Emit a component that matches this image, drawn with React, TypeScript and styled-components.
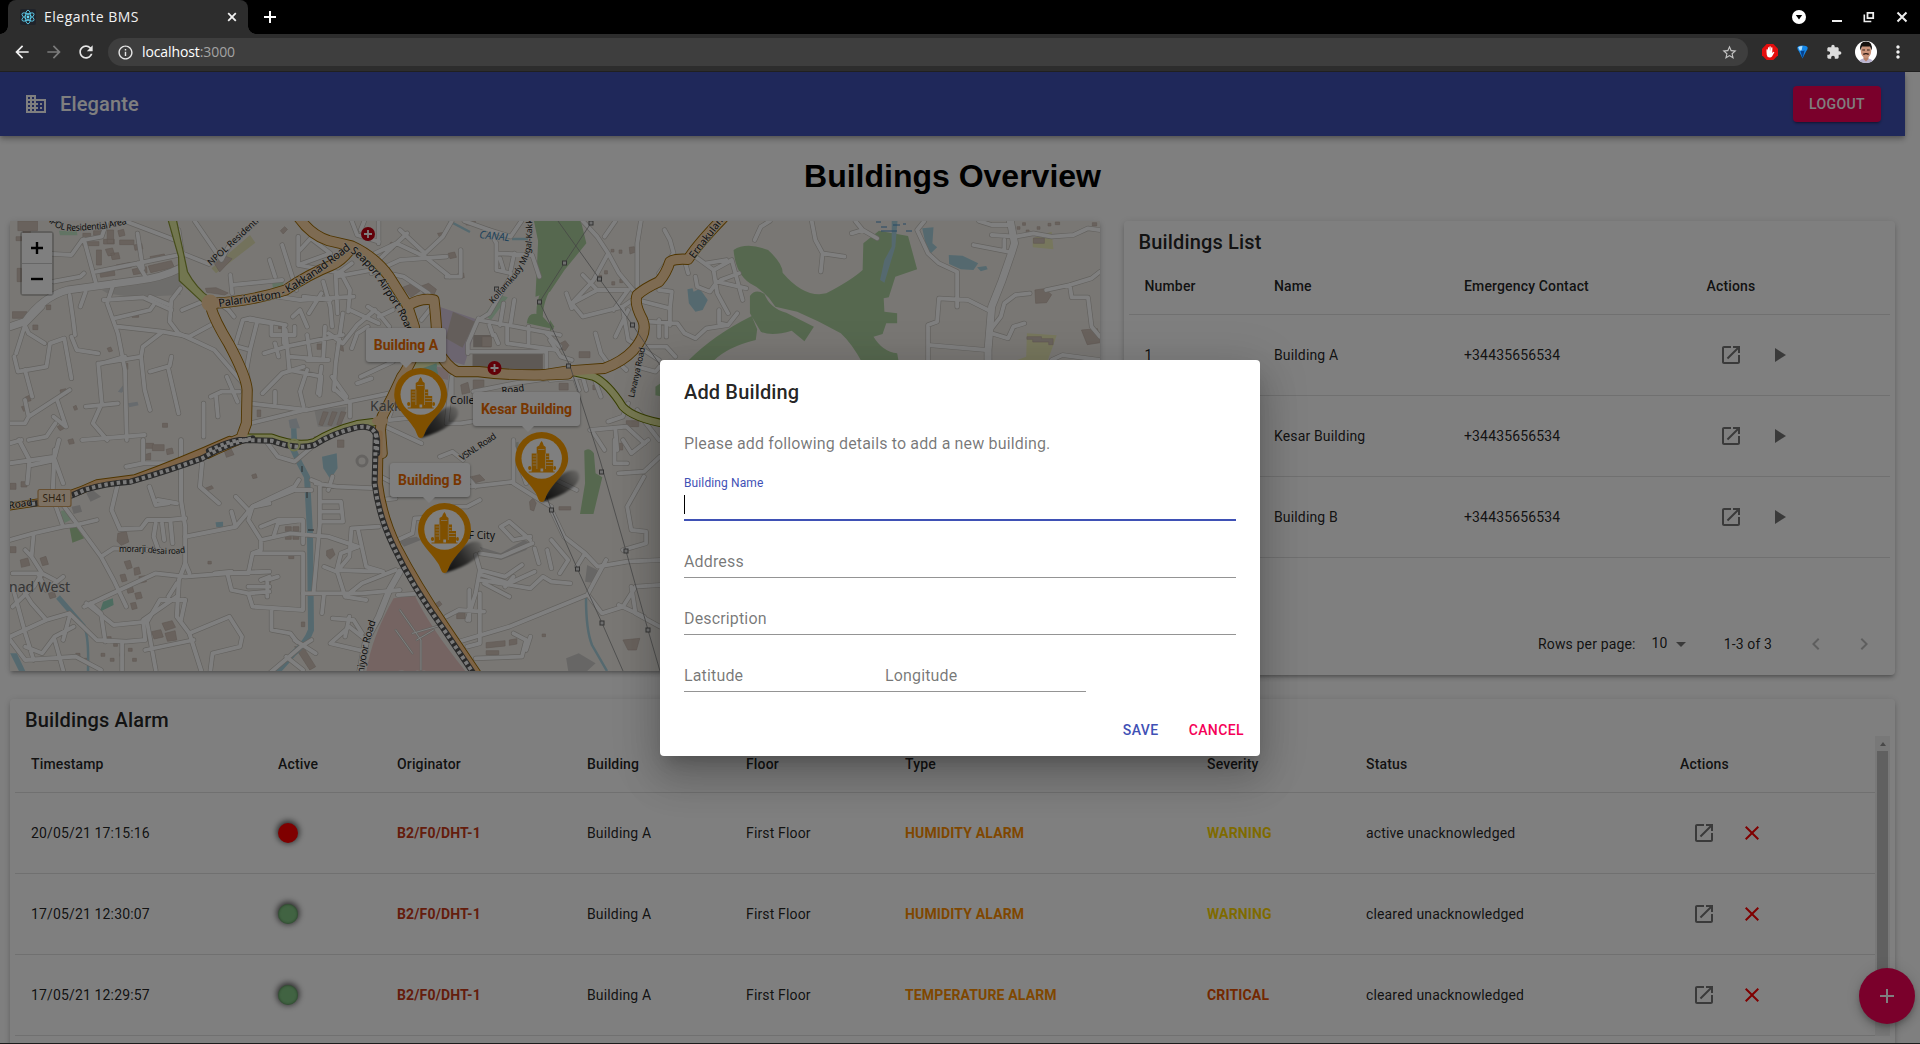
import React from "react";
import styled, { createGlobalStyle } from "styled-components";

const GlobalStyle = createGlobalStyle`
  html, body { margin: 0; padding: 0; background: #000; overflow: hidden; }
  * { box-sizing: border-box; }
`;

const UI = `Roboto, "Liberation Sans", sans-serif`;
const MAPFONT = `"Noto Sans", "Open Sans", sans-serif`;

/* ---------- browser frame ---------- */

const Screen = styled.div`
  width: 1920px;
  height: 1044px;
  display: flex;
  flex-direction: column;
  overflow: hidden;
  font-family: ${UI};
`;

const TabStrip = styled.div`
  height: 34px;
  flex: none;
  background: #000;
  display: flex;
  align-items: center;
  padding: 0 11px 0 8px;
`;

const Tab = styled.div`
  position: relative;
  width: 240px;
  height: 34px;
  background: #2d2d2d;
  border-radius: 8px 8px 0 0;
  display: flex;
  align-items: center;
  padding: 0 9px 0 12px;
  &::before, &::after {
    content: "";
    position: absolute;
    bottom: 0;
    width: 8px;
    height: 8px;
  }
  &::before { left: -8px; background: radial-gradient(circle at 0 0, #000 7.5px, #2d2d2d 8px); }
  &::after { right: -8px; background: radial-gradient(circle at 100% 0, #000 7.5px, #2d2d2d 8px); }
`;

const TabTitle = styled.span`
  flex: 1;
  margin-left: 8px;
  font: 400 14px/18px "Open Sans", "Noto Sans", sans-serif;
  letter-spacing: 0.5px;
  color: #f1f1f1;
`;

const NewTab = styled.div`
  margin-left: 15px;
  display: flex;
  flex: 1;
`;

const WindowButtons = styled.div`
  display: grid;
  grid-template-columns: 39px 32px 33px 13px;
  align-items: center;
`;

const Toolbar = styled.div`
  height: 38px;
  flex: none;
  background: #2d2d2d;
  border-bottom: 1px solid #202020;
  display: flex;
  align-items: center;
  padding: 0 0 1px 12px;
`;

const NavIcons = styled.div`
  display: flex;
  flex: none;
  gap: 12px;
  width: 96px;
`;

const Omnibox = styled.div`
  width: 1640px;
  flex: none;
  height: 28px;
  border-radius: 14px;
  background: #3e3e3e;
  display: flex;
  align-items: center;
  padding: 0 10px 0 9px;
`;

const Url = styled.span`
  flex: 1;
  margin-left: 8px;
  font: 400 14px/20px "Open Sans", "Noto Sans", sans-serif;
  letter-spacing: -0.1px;
  color: #fff;
  span { color: #a3a3a3; }
`;

const Extensions = styled.div`
  flex: none;
  margin-left: 6px;
  display: grid;
  grid-template-columns: repeat(5, 32px);
  align-items: center;
  justify-items: center;
`;

/* ---------- page ---------- */

const Viewport = styled.div`
  position: relative;
  height: 972px;
  flex: none;
  overflow: hidden;
  background: #fff;
  color: rgba(0, 0, 0, 0.87);
`;

const Page = styled.div`
  width: 1905px;
`;

const AppBar = styled.header`
  position: relative;
  height: 64px;
  background: #3f51b5;
  color: #fff;
  display: flex;
  align-items: center;
  padding: 0 24px;
  box-shadow: 0 2px 4px -1px rgba(0, 0, 0, 0.2), 0 4px 5px 0 rgba(0, 0, 0, 0.14), 0 1px 10px 0 rgba(0, 0, 0, 0.12);
`;

const Brand = styled.div`
  flex: 1;
  margin-left: 12px;
  font-size: 20px;
  line-height: 32px;
  font-weight: 500;
  letter-spacing: 0.0075em;
`;

const Logout = styled.button`
  width: 88px;
  height: 36px;
  padding: 0;
  border: 0;
  border-radius: 4px;
  background: #f50057;
  color: #fff;
  font: 500 14px/24px ${UI};
  letter-spacing: 0.02857em;
  box-shadow: 0 3px 1px -2px rgba(0, 0, 0, 0.2), 0 2px 2px 0 rgba(0, 0, 0, 0.14), 0 1px 5px 0 rgba(0, 0, 0, 0.12);
`;

const Heading = styled.h1`
  margin: 0;
  height: 85px;
  display: flex;
  align-items: center;
  justify-content: center;
  padding-bottom: 5px;
  font: 700 32px/38px "Liberation Sans", sans-serif;
  color: #000;
`;

const Content = styled.main`
  padding: 0 10px;
  display: grid;
  grid-template-columns: 1090px 771px;
  grid-template-rows: 454px 360px;
  gap: 24px 23.5px;
`;

const Paper = styled.section`
  background: #fff;
  border-radius: 4px;
  box-shadow: 0 3px 3px -2px rgba(0, 0, 0, 0.2), 0 3px 4px 0 rgba(0, 0, 0, 0.14), 0 1px 8px 0 rgba(0, 0, 0, 0.12);
  padding: 5px 5px 0;
`;

const WidePaper = styled(Paper)`
  grid-column: 1 / 3;
`;

const MapPaper = styled.section`
  position: relative;
  height: 450px;
  box-shadow: 0 3px 3px -2px rgba(0, 0, 0, 0.2), 0 3px 4px 0 rgba(0, 0, 0, 0.14), 0 1px 8px 0 rgba(0, 0, 0, 0.12);
  svg { display: block; }
`;

const CardTitle = styled.h2`
  margin: 0;
  padding-left: 10px;
  font: 500 20px/32px ${UI};
  letter-spacing: 0.0075em;
`;

const Row = styled.div<{ $cols: string; $head?: boolean }>`
  display: grid;
  grid-template-columns: ${(p) => p.$cols};
  align-items: center;
  height: ${(p) => (p.$head ? 57 : 81)}px;
  border-bottom: 1px solid #e0e0e0;
  font-size: 14px;
  font-weight: ${(p) => (p.$head ? 500 : 400)};
  letter-spacing: 0.01071em;
  line-height: 20px;
`;

const Cell = styled.div<{ $color?: string }>`
  padding-left: 16px;
  white-space: nowrap;
  ${(p) => (p.$color ? `color: ${p.$color}; font-weight: 700;` : "")}
`;

const CellActions = styled.div`
  padding-left: 28px;
  display: flex;
  gap: 24px;
  color: rgba(0, 0, 0, 0.54);
`;

const Led = styled.i<{ $on: boolean }>`
  display: block;
  width: 20px;
  height: 20px;
  border-radius: 50%;
  background: ${(p) => (p.$on ? "#f00" : "#83c785")};
  box-shadow: ${(p) =>
    p.$on
      ? "rgba(0,0,0,.7) 0 -1px 6px 1px"
      : "rgba(0,0,0,.7) 0 -1px 6px 1px, inset rgba(30,60,30,.6) 0 0 3px"};
`;

const Pagination = styled.div`
  display: flex;
  align-items: center;
  height: 56px;
  margin-top: 58px;
  padding-left: 409.5px;
  font-size: 14px;
  letter-spacing: 0.01071em;
`;

const PageSize = styled.span`
  display: flex;
  align-items: center;
  margin: -3px 31px 0 16px;
  svg { margin: 3px 0 0 1px; }
`;

const Pager = styled.div`
  display: flex;
  gap: 24px;
  margin-left: 32px;
  color: rgba(0, 0, 0, 0.26);
`;

const ScrollPane = styled.div`
  display: grid;
  grid-template-columns: 1860px 15px;
`;

const ScrollTrack = styled.div`
  background: #f1f1f1;
  display: flex;
  flex-direction: column;
  align-items: center;
`;

const ScrollArrow = styled.div`
  height: 15px;
  display: flex;
  align-items: center;
  &::after {
    content: "";
    border: 3.5px solid transparent;
    border-top: 0;
    border-bottom: 4px solid #909090;
    margin-top: 1px;
  }
`;

const ScrollThumb = styled.div`
  width: 11px;
  height: 245px;
  background: #c1c1c1;
`;

const Fab = styled.button`
  position: absolute;
  left: 1859px;
  top: 896px;
  width: 56px;
  height: 56px;
  padding: 0;
  border: 0;
  border-radius: 50%;
  background: #f50057;
  color: #fff;
  display: grid;
  place-items: center;
  box-shadow: 0 3px 5px -1px rgba(0, 0, 0, 0.2), 0 6px 10px 0 rgba(0, 0, 0, 0.14), 0 1px 18px 0 rgba(0, 0, 0, 0.12);
`;

const Backdrop = styled.div`
  position: absolute;
  inset: 0;
  background: rgba(0, 0, 0, 0.5);
  border-bottom: 1px solid #1c1c1c;
  display: flex;
  align-items: center;
  justify-content: center;
`;

/* ---------- dialog ---------- */

const Dialog = styled.div`
  width: 600px;
  height: 396px;
  background: #fff;
  border-radius: 4px;
  display: flex;
  flex-direction: column;
  box-shadow: 0 11px 15px -7px rgba(0, 0, 0, 0.2), 0 24px 38px 3px rgba(0, 0, 0, 0.14), 0 9px 46px 8px rgba(0, 0, 0, 0.12);
`;

const DialogTitle = styled.h2`
  margin: 0;
  padding: 16px 24px;
  font: 500 20px/32px ${UI};
  letter-spacing: 0.0075em;
`;

const DialogBody = styled.div`
  flex: 1;
  padding: 8px 24px 0;
  display: flex;
  flex-direction: column;
`;

const DialogText = styled.p`
  margin: 0 0 17px;
  font-size: 16px;
  line-height: 24px;
  letter-spacing: 0.00938em;
  color: rgba(0, 0, 0, 0.54);
`;

const Field = styled.label<{ $focused?: boolean; $width?: number }>`
  width: ${(p) => (p.$width ? `${p.$width}px` : "100%")};
  height: 48px;
  margin-bottom: 9px;
  display: flex;
  flex-direction: column;
  justify-content: space-between;
  padding-top: ${(p) => (p.$focused ? 2 : 21)}px;
  border-bottom: ${(p) => (p.$focused ? "2px solid #3f51b5" : "1px solid #949494")};
  font-size: ${(p) => (p.$focused ? 12 : 16)}px;
  line-height: ${(p) => (p.$focused ? 16 : 22)}px;
  letter-spacing: 0.00938em;
  color: ${(p) => (p.$focused ? "#3f51b5" : "rgba(0,0,0,.54)")};
`;

const Caret = styled.i`
  width: 1px;
  height: 19px;
  margin-bottom: 5px;
  background: #000;
`;

const FieldPair = styled.div`
  display: flex;
`;

const DialogActions = styled.div`
  display: flex;
  justify-content: flex-end;
  gap: 8px;
  padding: 0 8px 8px;
`;

const TextButton = styled.button<{ $color: string }>`
  height: 36px;
  min-width: 64px;
  padding: 0 8px;
  border: 0;
  background: none;
  color: ${(p) => p.$color};
  font: 500 14px/24px ${UI};
  letter-spacing: 0.02857em;
`;

/* ---------- map overlays ---------- */

const ZoomControl = styled.div`
  position: absolute;
  left: 10px;
  top: 10px;
  width: 34px;
  border: 2px solid rgba(0, 0, 0, 0.2);
  border-radius: 4px;
  background-clip: padding-box;
`;

const ZoomButton = styled.div`
  height: 30px;
  background: #fff;
  background-clip: padding-box;
  display: grid;
  place-items: center;
  & + & { border-top: 1px solid #ccc; height: 31px; }
`;

const Tip = styled.div<{ $x: number; $y: number; $w: number; $arrow: number }>`
  position: absolute;
  left: ${(p) => p.$x}px;
  top: ${(p) => p.$y}px;
  width: ${(p) => p.$w}px;
  height: 34px;
  border-radius: 3px;
  background: #fff;
  color: #ee6c00;
  font: 700 14px/35px ${UI};
  text-align: center;
  white-space: nowrap;
  box-shadow: 0 1px 3px rgba(0, 0, 0, 0.4);
  &::after {
    content: "";
    position: absolute;
    left: ${(p) => p.$arrow}px;
    bottom: -6px;
    margin-left: -6px;
    border: 6px solid transparent;
    border-bottom: 0;
    border-top-color: #fff;
  }
`;

/* ---------- icons ---------- */

const paths = {
  business:
    "M12 7V3H2v18h20V7H12zM6 19H4v-2h2v2zm0-4H4v-2h2v2zm0-4H4V9h2v2zm0-4H4V5h2v2zm4 12H8v-2h2v2zm0-4H8v-2h2v2zm0-4H8V9h2v2zm0-4H8V5h2v2zm10 12h-8v-2h2v-2h-2v-2h2v-2h-2V9h8v10zm-2-8h-2v2h2v-2zm0 4h-2v2h2v-2z",
  open: "M19 19H5V5h7V3H5c-1.11 0-2 .9-2 2v14c0 1.1.89 2 2 2h14c1.1 0 2-.9 2-2v-7h-2v7zM14 3v2h3.59l-9.83 9.83 1.41 1.41L19 6.41V10h2V3h-7z",
  play: "M8 5v14l11-7z",
  close: "M19 6.41L17.59 5 12 10.59 6.41 5 5 6.41 10.59 12 5 17.59 6.41 19 12 13.41 17.59 19 19 17.59 13.41 12z",
  add: "M19 13h-6v6h-2v-6H5v-2h6V5h2v6h6v2z",
  left: "M15.41 7.41L14 6l-6 6 6 6 1.41-1.41L10.83 12z",
  right: "M10 6L8.59 7.41 13.17 12l-4.58 4.59L10 18l6-6z",
  drop: "M7 10l5 5 5-5z",
  back: "M20 11H7.83l5.59-5.59L12 4l-8 8 8 8 1.41-1.41L7.83 13H20v-2z",
  forward: "M12 4l-1.41 1.41L16.17 11H4v2h12.17l-5.58 5.59L12 20l8-8z",
  reload:
    "M17.65 6.35C16.2 4.9 14.21 4 12 4c-4.42 0-7.99 3.58-7.99 8s3.57 8 7.99 8c3.73 0 6.84-2.55 7.73-6h-2.08c-.82 2.33-3.04 4-5.65 4-3.31 0-6-2.69-6-6s2.69-6 6-6c1.66 0 3.14.69 4.22 1.78L13 11h7V4l-2.35 2.35z",
  info: "M11 7h2v2h-2zm0 4h2v6h-2zm1-9C6.48 2 2 6.48 2 12s4.48 10 10 10 10-4.48 10-10S17.52 2 12 2zm0 18c-4.41 0-8-3.59-8-8s3.59-8 8-8 8 3.59 8 8-3.59 8-8 8z",
  star: "M22 9.24l-7.19-.62L12 2 9.19 8.63 2 9.24l5.46 4.73L5.82 21 12 17.27 18.18 21l-1.63-7.03L22 9.24zM12 15.4l-3.76 2.27 1-4.28-3.32-2.88 4.38-.38L12 6.1l1.71 4.04 4.38.38-3.32 2.88 1 4.28L12 15.4z",
  puzzle:
    "M20.5 11H19V7c0-1.1-.9-2-2-2h-4V3.5C13 2.12 11.88 1 10.5 1S8 2.12 8 3.5V5H4c-1.1 0-1.99.9-1.99 2v3.8H3.5c1.49 0 2.7 1.21 2.7 2.7s-1.21 2.7-2.7 2.7H2V20c0 1.1.9 2 2 2h3.8v-1.5c0-1.49 1.21-2.7 2.7-2.7 1.49 0 2.7 1.21 2.7 2.7V22H17c1.1 0 2-.9 2-2v-4h1.5c1.38 0 2.5-1.12 2.5-2.5S21.88 11 20.5 11z",
  dots: "M12 8c1.1 0 2-.9 2-2s-.9-2-2-2-2 .9-2 2 .9 2 2 2zm0 2c-1.1 0-2 .9-2 2s.9 2 2 2 2-.9 2-2-.9-2-2-2zm0 6c-1.1 0-2 .9-2 2s.9 2 2 2 2-.9 2-2-.9-2-2-2z",
};

const Icon = ({ name, size = 24, color = "currentColor" }: { name: keyof typeof paths; size?: number; color?: string }) => (
  <svg width={size} height={size} viewBox="0 0 24 24" fill={color}>
    <path d={paths[name]} />
  </svg>
);

const ReactLogo = () => (
  <svg width="16" height="16" viewBox="0 0 16 16">
    <rect width="16" height="16" rx="2" fill="#20232a" />
    <g fill="none" stroke="#61dafb" strokeWidth=".8">
      {[0, 60, 120].map((a) => (
        <ellipse key={a} cx="8" cy="8" rx="6.8" ry="2.7" transform={`rotate(${a + 30} 8 8)`} />
      ))}
    </g>
    <circle cx="8" cy="8" r="1.4" fill="#61dafb" />
  </svg>
);

const Avatar = () => (
  <svg width="22" height="22" viewBox="0 0 22 22">
    <clipPath id="face"><circle cx="11" cy="11" r="11" /></clipPath>
    <g clipPath="url(#face)">
      <rect width="22" height="22" fill="#fff" />
      <path d="M3 22q1-4 6-4.500h4q5 .5 6 4.500z" fill="#b9b3cf" />
      <path d="M8.500 14h5v4l-2.500 2.500L8.500 18z" fill="#b98268" />
      <ellipse cx="11" cy="10" rx="5.200" ry="7" fill="#c99279" />
      <path d="M5.300 9.500Q4 .5 11 .5t5.700 9L15 5.600H7z" fill="#15110f" />
      <path d="M7.300 9h2.700M12 9h2.700" stroke="#33201a" strokeWidth="1.200" />
      <path d="M8.300 13.400q2.700-1.600 5.400 0" stroke="#2a1712" strokeWidth="1.400" fill="none" />
    </g>
  </svg>
);

/* ---------- map ---------- */

type Sheet = "nw" | "sw" | "ne";
const sheets: Record<Sheet, string> = {
  nw: "translate(0 210) scale(.357143 .333333)",
  sw: "translate(0 440) scale(.420911 .333333)",
  ne: "translate(550 210) scale(.363504 .333333)",
};

const areas: [Sheet, string, string][] = [
  ["nw", "#add19e", "M1495 33H1570V190Q1520 260 1520 320L1552 358 1475 340Q1478 308 1502 312 1500 250 1550 180L1540 130 1510 110Z"],
  ["nw", "#c5e8c9", "M1355 315L1400 255 1422 262 1375 330ZM165 62H215L217 76H168ZM762 218L795 215 790 235 765 240Z"],
  ["nw", "#d9cbe0", "M1230 290L1340 330 1300 465 1250 450Z"],
  ["nw", "#c9bdb6", "M1268 305L1330 335 1295 413 1248 385Z"],
  ["nw", "#bdb2ab", "M1323 432H1520V480H1323ZM1325 375H1375V412H1325Z"],
  ["nw", "#e7e5b8", "M700 75L715 98 605 190 592 175Z"],
  ["nw", "#eef0b4", "M1140 470L1160 455 1225 452 1240 462 1190 475Z"],
  ["nw", "#a3ddc6", "M1175 478L1222 460 1230 500 1200 485Z"],
  ["nw", "#e6cfd0", "M1222 470L1258 475 1255 510 1230 505Z"],
  ["nw", "#dcdad6", "M285 240L400 212 490 178 510 200 505 255 370 262 300 250ZM880 600L970 590 955 650 890 650Z"],
  ["nw", "#cfd6dc", "M330 545L345 525 352 540 340 548ZM358 580L385 575 388 586 362 592ZM808 630L830 625 840 655 812 655Z"],
  ["nw", "#aad3df", "M815 655H830L832 690 816 700Z"],
  ["sw", "#aad3df", "M765 50L800 40 802 85 785 118 768 85ZM512 247L530 245 530 260 514 262Z"],
  ["sw", "#aad3df", "M24 640L40 640 60 693 45 693Z"],
  ["sw", "#add19e", "M1388 32Q1400 20 1411 40L1415 100 1431 112 1410 222 1378 222 1390 130ZM165 262L180 258 200 295 172 308Z"],
  ["sw", "#c5e8c9", "M145 212L160 210 168 240 148 252Z"],
  ["sw", "#9ad8c0", "M237 515L245 485 268 475 270 495Z"],
  ["sw", "#ebc9c5", "M935 475L985 465Q1020 560 1110 700H870Q880 600 935 475Z"],
  ["sw", "#cfcdcb", "M1140 320L1190 340 1245 300 1262 310 1250 330 1190 360 1150 345ZM945 300L990 290 1000 300 960 320ZM1395 375L1420 390 1415 430 1390 425ZM1345 655L1375 640 1415 670 1395 693H1350ZM170 200L190 195 195 215 175 222ZM205 160L220 150 240 170 215 185Z"],
  ["sw", "#cdd0c2", "M1218 10L1232 5 1232 80 1218 70Z"],
  ["ne", "#add19e", "M-30 33H85L100 100 40 180 0 245-40 260Z"],
  ["ne", "#add19e", "M505 120Q540 95 600 120 640 160 640 188 700 265 760 250 830 210 860 180L862 100 905 62 985 78 1010 178 950 200 932 262 918 265 920 305 955 310V340L925 340 915 372 890 380Q915 425 955 430L960 460H860Q830 400 800 370L740 335 680 305 620 290Q590 240 550 220 510 190 505 120Z"],
  ["ne", "#add19e", "M550 258Q565 235 590 252 605 295 650 308L726 350 700 394 665 362Q610 380 580 365L550 310ZM380 452Q450 375 555 318L570 358 566 390Q490 410 450 452ZM290 530L310 515V560L290 556ZM0 330L12 350 0 365Z"],
  ["ne", "#aad3df", "M378 238L392 235 395 245 412 236 434 270 420 300 400 305 382 280ZM1024 55L1055 52 1052 100 1065 112 1048 130 1035 112ZM1097 135L1135 137 1178 160 1165 180 1130 178 1098 162ZM1175 172L1200 168 1204 178 1185 184Z"],
  ["ne", "#aad3df", "M940 33H956L950 110 920 218 908 210 920 150 940 110Z"],
  ["ne", "#efeebb", "M1328 85L1380 65 1385 118 1328 112ZM1312 370L1394 376 1370 450H1285L1310 440Z"],
];

const buildings: [Sheet, string][] = [
  ["nw", "M50 33H105V62H85V90H65V62H50ZM232 70h22v18h-22zM262 62h30v14h-30zM300 60h18v40h-18zM330 62l16-4 4 18-16 4zM232 95h45v12h-45zM290 88h30v14h-30zM335 90h40v14h-40zM270 120h14v45h-14zM295 118l20-4 6 20-18 4zM375 105l22-4 3 16-22 4zM325 165l40-8 3 15-40 8zM420 140l40-8 4 14-40 8zM415 168l65-16 8 20-66 16zM280 190l40-8 2 14-40 6zM370 178l40-8 2 18-38 6zM310 130l22-2 4 18-22 3z"],
  ["nw", "M785 62l12-12 8 8-12 14zM1225 70l25-4-5 14-14 2zM1255 130l18-4 5 16-18 4zM1280 192l18-3 2 14-18 2zM1305 33h26v12h-26zM1095 96l16 10-10 14-16-8zM600 160l30-22 20 8-35 40zM888 402h18v16h-18zM940 400l18-10 4 34-18-8zM780 340h12v16h-12zM575 235l30-2 34 16-10 6-50-8zM1180 228l20-8 22 18-12 28-24-10zM1128 232l32-14 20 22-30 22zM1325 510h30v35h-30zM1290 525l20-8 6 30-22 6zM1350 380h26v30h-26z"],
  ["nw", "M45 80h16v12H45zM48 175h12v40H48zM35 305h40v20H35zM130 285h12v14h-12zM92 345h14v14H92zM370 312h18v10h-18zM300 415l10-4 5 12-10 3zM348 460h10v18h-10zM168 540l16-4 4 18-16 4zM70 562l12-6 5 16-14 4zM60 590l14-4 4 14-12 4zM205 590l8-4 4 12-8 3zM160 650l14-8 8 12-14 8zM190 690l14-4 4 14-14 3zM455 640h14v12h-14zM400 700h30v15h-30zM720 600h10v20h-10zM905 605l14 2-16 40-10-3zM930 605l14 2-16 40-10-3zM955 605l14 2-16 40-10-3zM880 680h10v18h-10zM945 690h18v22h-18z"],
  ["sw", "M340 45l18-6v20h-18zM362 14h28v18h-28zM395 28l14-4 3 16-15 4zM420 62l14-4 3 18-14 4zM532 30l16-6 8 20-18 8zM24 130h14v18H24zM50 125h14v16H50zM598 105l10-4 3 12-10 3zM487 145l16-8 4 8-16 8zM280 280l20-6 6 32-18 10-10-12zM678 260h14v14h-14zM696 260h14v14h-14zM678 278h14v20h-14zM696 278h14v20h-14zM776 332l14-6 6 18-12 14-8-10zM686 340h12v16h-12zM494 364h8v8h-8zM632 412h10v18h-10zM716 546h8v14h-8zM1120 110l20-6 12 16-22 8zM1328 200h28v10h-28zM1258 185l8-10 8 14-6 24-8-4z"],
  ["sw", "M24 320h14v18H24zM48 360l18-6 5 22-20 6zM50 396h18v10H50zM95 355l14-6 6 24-14 4zM90 400h14v12H90zM128 420h14v12h-14zM115 460l14-5 4 16-14 5zM50 440h14v14H50zM295 365l14-4 5 22-12 5zM318 385l12-4 4 20-14 5zM285 405l12-3 5 20-12 4zM330 410l14-3 4 18-14 4zM300 440l14-4 4 20-14 4zM320 460l14-4 4 18-14 4zM310 490l12-3 4 18-12 4zM385 550l24-8 8 20-24 10zM360 575l22-6 6 22-22 6zM392 580l24-8 4 28-22 4zM255 590h9v9h-9zM270 610h9v9h-9zM285 640h9v9h-9zM305 625h9v9h-9zM315 655h9v9h-9zM240 640h9v9h-9zM262 655h9v9h-9zM180 640h10v12h-10zM200 655h10v12h-10zM700 620l20 0 30 60-14 10zM1155 608l45-6v16l-45 6zM1155 632h30v12h-30zM1210 600l18-4v16l-18 4zM1085 518h20v18h-20zM1030 495l14-12 6 10-14 14zM1480 600l40-5-8 35-20 0zM1288 582h8v8h-8z"],
  ["ne", "M218 112l14-2 4 16-16 6zM168 118h8v8h-8zM190 120h8v10h-8zM150 182h8v10h-8zM170 215h8v10h-8zM192 208h8v10h-8zM134 196h8v10h-8zM28 400l14-8 10 14-10 16-14-6zM80 425h30v18H80zM25 520h25v20H25zM210 632h34v18h-34zM180 700h20v20h-20zM118 525h12v14h-12zM1334 240l26-4 20 18-14 24-30 2zM1462 360l44-4 8 42-36 6zM1312 380h40v6h32v18h-12v-8h-44v-8h-16zM1330 84h30v16h-30zM1492 38h12v10h-12zM1285 50h8v8h-8zM1310 60h8v8h-8zM1340 50h8v8h-8zM1370 40h8v8h-8zM1390 36h12v8h-12zM1300 38h8v8h-8z"],
];

/* minor streets */
const streets: [Sheet, string, number?][] = [
  ["nw", "M28 350L70 335Q120 260 190 240L380 212Q450 205 510 172", 7],
  ["nw", "M300 33L285 80 235 90M235 88L270 225 220 240M270 185L385 160 500 135M385 160L410 205M350 33L490 90M120 130L200 135 230 90M150 215L225 200 235 190M385 70L400 175M500 60L510 130 585 162M545 33L620 150 640 110"],
  ["nw", "M65 335L80 370 125 400M40 440L50 485 130 470 140 400 180 385 200 505M195 255L205 330 210 375M240 245L225 290M200 380L215 420 275 430M320 215L300 280 330 370 350 480 355 690M290 270L400 262 480 300M320 325L420 300 430 285M120 290L70 345 45 430M280 460L395 440 400 410 455 365 530 380 590 345M275 460L285 580M350 440L280 462M330 350L455 365"],
  ["nw", "M505 235L480 270 475 335 500 370 600 420 680 520M510 300L590 265M420 260L475 285M70 480L90 560M28 700L60 690M70 570L80 620 70 640 30 640M80 620L195 540M160 570L185 650 150 620M80 690L130 680 155 640M285 580L260 640 300 690M240 590L330 580M395 440L405 540 420 600M230 690L405 675M420 485L475 468 480 440M470 470L500 610"],
  ["nw", "M645 195L650 250M650 225L790 210M755 150L770 200M620 285L640 300 655 320M790 105L830 240M835 80V165L925 130 870 85 840 120M835 165L960 190M870 70L935 100M985 160L940 195 945 310M940 200L1040 180 1090 190M905 215L925 290 930 350M900 250L865 310M960 200L980 240 975 305M925 270L850 260M745 255L840 270 990 260"],
  ["nw", "M650 405L700 420M655 420L680 330 700 325 800 345M760 340V375H825V350M795 350V400M820 320L840 300 860 350M700 540L690 480 700 420 720 335M760 340L700 330M740 430L800 410 960 375M800 360L810 480M860 375L870 450M910 350L905 450 860 450M960 310L940 460 935 540M770 400L780 440M810 480L900 500 895 555M860 480L840 545 850 590M810 440L920 450M920 370L960 400 1000 345 1050 300"],
  ["nw", "M700 580L860 600 1000 570 1100 548M590 560L620 545 670 545M605 560L610 620M700 640L860 598M735 550L790 490 850 470M770 580L770 545M940 540L980 580 980 620M900 470L890 550M930 500L970 560M570 580L570 680M635 500L665 575M1040 190L1120 150 1250 140M985 33L1000 75 1060 95M1020 33L1010 60"],
  ["nw", "M1120 60L1190 130 1240 80 1265 33M1060 33L1060 100M1050 130L1110 100 1190 140 1260 200M1040 180L1130 200 1200 250M1140 70L1050 160M1300 33L1370 60 1430 80 1460 33M1370 60L1390 100 1390 180 1430 190M1390 130L1490 135 1510 200M1400 145L1410 180M1440 130L1430 180M1290 120V200L1250 200M1210 290L1180 330M1030 290L1060 310 1090 350M1060 320L1100 300M985 415L1000 370 1030 350M980 300L1060 340"],
  ["nw", "M1340 325L1310 400 1310 430M1340 330L1420 345 1568 375M1340 330L1370 310 1430 200M1370 345L1380 375M1420 350L1420 400 1560 420M1310 425H1530V480M1350 485H1420M1385 375L1395 400M1265 500L1250 640 1290 640 1440 615M1265 500V560M1410 280L1400 345M1440 270L1430 340M1480 350V400M1530 370L1568 410M1140 510L1110 560 1090 620M1090 630L1180 620 1190 640M1080 650L1180 700"],
  ["nw", "M1325 545L1440 520 1568 500M1010 500L1100 455M1000 520L1040 505"],
  ["sw", "M24 70L130 50 140 0M45 0L70 60 65 130M75 75L130 60 150 130M130 30L125 160M280 130L265 210 285 268 335 265 350 240 400 240 440 235M430 0L430 180 440 260 440 370 450 400", 4],
  ["sw", "M440 370L425 420 420 530 450 580 480 700M340 0V70L300 80M340 70L420 70M355 140L370 195 400 190M370 250L365 290 375 325M385 250L390 300M405 245L410 310M480 70L475 140 520 190M420 190L375 180M440 290L560 260 600 200 640 190M560 260L550 215M600 200L700 140 710 120", 4],
  ["sw", "M24 300L80 280 150 260 130 190 150 195 240 350 270 420 300 500M150 260L180 255 230 240M80 280L75 350 100 400 80 440 30 500M30 400L90 400 110 450 150 410M100 400L130 420M60 330L75 350M240 350L270 325 340 330 380 330M200 500L250 470 370 400 440 410 540 400 640 395M205 490L270 555 350 545 380 480 440 480"],
  ["sw", "M24 590L110 540 165 520M30 440L60 580 80 660M110 540L75 490 50 440M165 520L230 600 300 605 345 600 340 540 420 470M165 530L150 600M24 600L60 660 180 650 240 690M60 620L100 640 130 590 175 560M130 600L150 690M290 610V690M250 605L240 520 215 490M350 550L370 690M345 630L460 600M450 580L545 530 575 590 570 620 505 640 500 690M440 480L430 540M400 470L420 430"],
  ["sw", "M590 240L600 200 700 150 740 150M590 240L620 300 690 280 780 290 850 320M620 300V330L600 340M650 290L660 250 720 240 720 310M720 240L660 240 620 260M600 340H720M600 340L590 400 540 400 550 450 590 460 640 455M550 395L510 400M620 420L640 410M660 410L635 420V470M640 440L590 440M590 460L600 500 720 510V340M645 510V570L690 580 705 605M590 210L560 170M630 0L660 50 700 65 760 0"],
  ["sw", "M740 120L760 130V250M750 130L800 140 900 145M765 185H810L815 245H760M765 215H812M780 150L790 110M760 250L745 460M835 265L900 260M835 265L830 350 800 395 770 380M850 265L870 380 910 395M850 320L810 340 800 390 900 395M720 460L860 460 950 450M800 390L820 470 870 480M770 460L765 520M820 470L860 430 940 390M790 535L840 540 860 580M785 610L830 560 870 600M785 610L870 635M820 590L830 530"],
  ["sw", "M950 395L925 450 900 530 870 600 855 700", 6],
  ["sw", "M640 700L715 620 740 600M700 600L750 640M680 650L720 690M945 465L1000 460M945 300L980 280 985 235 1060 230M1050 200L1110 200 1140 180M1120 140L1220 125V0M905 110L935 130 990 120M905 180L940 175M1045 50L1075 35 1100 60M1130 140L1110 110M1220 130L1270 170 1310 200M1220 20L1250 130M1300 0L1320 120 1370 150"],
  ["sw", "M1310 210L1340 290 1390 340 1420 380 1490 365 1568 360M1310 300L1350 360 1330 400M1270 325L1280 370M1300 330L1310 385M1390 340L1370 380M1260 300L1210 245 1190 260 1220 300 1260 290M1140 340L1190 350 1265 310M1130 345L1140 390 1130 460 1110 540M1140 390L1200 410 1240 375M1145 405L1210 430 1270 395M1140 420L1260 445 1290 410 1310 425 1355 430M1150 430L1210 470M1115 450V540M1060 530L1090 510 1150 515"],
  ["sw", "M1090 605L1210 560 1395 465M1110 620L1140 610 1140 460M1130 655L1240 650 1250 600 1220 580M1260 590L1250 630M1400 470L1430 520 1480 500 1510 440 1568 435M1395 465L1440 360M1470 495L1530 530M1500 440L1510 520 1568 560M1530 110L1490 200 1500 270 1535 275V310L1480 330M1460 0L1460 70 1490 70M1480 0L1500 40 1540 0M1470 100L1530 95 1568 50M1220 410L1200 440"],
  ["sw", "M950 510L1000 600 1000 690M980 580L1050 555M940 570L980 640M990 600L1030 570", 1],
  ["ne", "M90 33L130 80 160 130 190 190 240 255M160 130L120 210 60 280M180 33L150 80M250 33L240 100 240 230M60 280L130 240 215 240M60 280L90 320 200 290 240 260M45 250L60 295M215 240L175 300M90 195L130 240M315 60L330 90 340 130 300 190M370 150L380 190M400 200L405 230 440 245 460 215 540 235M400 140L450 180 460 250 490 310M450 180L500 150 530 270M470 210L520 190M430 160L485 150M240 270L330 295 330 345M270 335L350 340 370 370 400 385 430 355 490 345 515 310M465 300V340L490 345M300 330V380M320 345V380M300 240L335 245 330 295M200 295L215 390 300 450M270 410L320 410 345 440M125 370L140 430 160 460M180 380L215 300"],
  ["ne", "M0 390L30 440 60 450M0 510L100 500M90 500L100 540M70 510L80 540M120 500L140 560M190 460L210 480M240 470L290 485 310 460M215 580L200 620 160 635M110 660L210 650 260 700M120 670L150 720M180 660L185 720M250 620L300 690M240 600L270 640"],
  ["ne", "M605 33L580 50 563 90M720 33L730 90 750 130 745 185M750 130L810 140M830 70L860 60 900 85M840 33L860 60M1030 33L1010 60 1040 130 1070 160 1120 185V290M1205 300L1150 270 1070 265 1065 335 1040 345 1040 450M1040 405L1200 420M1215 370L1260 385 1275 350 1305 340M1215 355L1240 320 1250 280 1280 255 1320 250M1365 240L1430 225 1490 205 1513 185M1430 225L1435 262H1480L1490 350 1513 380M1165 105L1260 125M1250 120V90M1215 75L1280 80 1330 70 1380 80 1440 75 1480 55 1513 60M1180 33L1215 45H1260M1380 450L1410 435 1513 450"],
  ["ne", "M1265 25L1278 100Q1250 200 1215 290L1205 420 1205 470", 7],
];

const primary: [Sheet, string][] = [
  ["nw", "M835 20Q870 75 920 92L985 108Q1050 140 1090 200L1140 285 1160 350 1160 430Q1140 480 1125 500 1100 560 1070 620L1065 660 1070 730"],
  ["nw", "M985 112Q960 150 930 165 860 195 800 240 700 275 590 280"],
  ["nw", "M590 290Q600 330 640 400 690 500 692 540L690 640 675 685Q640 700 580 730"],
  ["nw", "M1145 285Q1180 262 1215 270 1222 330 1225 420 1250 470 1280 485L1340 485Q1450 500 1590 492"],
  ["ne", "M-20 495L50 483 150 475Q200 455 230 420 270 370 255 330 230 280 240 255 260 235 300 215 320 190 330 155 345 145 380 148 400 110 475 25"],
];
const railside: [Sheet, string][] = [
  ["sw", "M10 202L90 187Q160 172 230 130L320 115Q420 70 545 0"],
  ["sw", "M902-20L900 130Q910 230 945 320 990 430 1060 560L1140 710"],
];
const secondary: [Sheet, string][] = [
  ["ne", "M60 485L120 500Q160 520 200 590 230 625 320 642"],
  ["nw", "M670 683L760 683Q830 712 880 697 930 662 1000 643L1045 637"],
];
const rails: [Sheet, string][] = [
  ["nw", "M585 722Q640 695 670 690L760 692Q830 720 880 705 930 670 1000 652 1052 642 1056 690L1056 730"],
  ["sw", "M75 192Q150 182 200 150 250 130 310 125 400 92 480 55 540 10 600-5"],
  ["sw", "M893-20L890 130Q900 230 935 320 980 440 1050 560L1130 710"],
];

const Strokes = ({ items, color, width }: { items: [Sheet, string, number?][]; color: string; width: (w?: number) => number }) => (
  <>
    {items.map(([s, d, w], i) => (
      <path key={i} transform={sheets[s]} d={d} fill="none" stroke={color} strokeWidth={width(w)} vectorEffect="non-scaling-stroke" strokeLinecap="round" strokeLinejoin="round" />
    ))}
  </>
);

const pylons: [number, number][] = [
  [591, 223], [564.5, 263], [599.5, 279], [632.5, 325], [568.5, 366], [496.5, 289], [539.5, 302],
  [601.5, 472], [626, 551], [648, 630], [551.5, 510], [577.5, 569], [602, 623],
];

const curves: { id: string; d: string; text: string; size: number; len?: number }[] = [
  { id: "pk", d: "M219 307L279 298Q300 287 322 271L352 248", text: "Palarivattom - Kakkanad Road", size: 11, len: 148 },
  { id: "sa", d: "M350 252Q366 263 379 283L392 303Q400 313 409 338", text: "Seaport Airport Road", size: 10.5, len: 101 },
  { id: "km", d: "M493 304L516 278Q531 258 532 240L533 190", text: "Kollamkudy Mugal-Kakkanad", size: 8.6 },
  { id: "np", d: "M211 266L300 184", text: "NPOL Residential Area", size: 9 },
  { id: "na", d: "M46 218Q55 231 72 231L105 229 135 222", text: "NPOL Residential Area", size: 9.2, len: 86 },
  { id: "lr", d: "M634 398L648 335", text: "Lavanya Road", size: 8.5, len: 51 },
  { id: "er", d: "M694 259L750 187", text: "Ernakulam", size: 10.2 },
  { id: "vs", d: "M462 461L510 429", text: "VSNL Road", size: 9, len: 42 },
  { id: "md", d: "M119 552L148 552Q165 556 190 552", text: "morarji desai road", size: 8.5, len: 67 },
  { id: "ni", d: "M362 690Q365 650 378 615", text: "Thaniyoor Road", size: 10, len: 70 },
];

const Pin = ({ x, y }: { x: number; y: number }) => (
  <g transform={`translate(${x} ${y})`}>
    <path d="M0 0Q4-8 13-22Q28-35 36-30Q41-22 29-13Q18-5 0 0Z" fill="url(#pinShade)" filter="url(#soften)" />
    <path d="M0 0C-3 0-3-3-6-9-15-23-26.500-30-26.500-43.500A26.500 26.500 0 0 1 26.500-43.500C26.500-30 15-23 6-9 3-3 3 0 0 0Z" fill="#ffa000" />
    <circle cy="-43.500" r="20.200" fill="#fff" />
    <g fill="#ffa000">
      <path d="M-13-30.500H13V-29.500H-13ZM-10-30.500V-48.500H-5V-55L-2.500-56.500-1.500-59 0-61 1.200-59 2-56.500 4-55V-48.500H7.500V-42H11.500V-30.500Z" />
      <ellipse cx="-12" cy="-34" rx="1.600" ry="2" />
      <ellipse cx="13" cy="-34" rx="1.400" ry="2" />
    </g>
    <path d="M-4.800-48.500V-33M3.800-48.500V-33M-9-46H-5.500M-9-43H-5.500M-9-40H-5.500M-9-37H-5.500M-3.500-52.500H2.800M4.500-45.500H7M4.500-42.500H7M4.500-39.500H11M4.500-36.500H11" stroke="#fff" strokeWidth=".6" />
    <path d="M-1.200-30.500V-33.500H1.500V-30.500Z" fill="#fff" />
  </g>
);

const MapDrawing = () => (
  <svg width="1090" height="450" viewBox="10 221 1090 450" fontFamily={MAPFONT}>
    <defs>
      <linearGradient id="pinShade" gradientUnits="userSpaceOnUse" x1="0" y1="0" x2="38" y2="-27">
        <stop offset="0" stopColor="#000" stopOpacity=".9" />
        <stop offset=".5" stopColor="#000" stopOpacity=".65" />
        <stop offset="1" stopColor="#000" stopOpacity=".15" />
      </linearGradient>
      <filter id="soften" x="-20%" y="-20%" width="140%" height="140%">
        <feGaussianBlur stdDeviation="1.2" />
      </filter>
      {curves.map((c) => (
        <path key={c.id} id={c.id} d={c.d} />
      ))}
    </defs>
    <rect x="10" y="221" width="1090" height="450" fill="#f2efe9" />
    {areas.map(([s, fill, d], i) => (
      <path key={i} transform={sheets[s]} d={d} fill={fill} />
    ))}
    {buildings.map(([s, d], i) => (
      <path key={i} transform={sheets[s]} d={d} fill="#d3c5bb" stroke="#bfaea4" strokeWidth=".6" vectorEffect="non-scaling-stroke" />
    ))}
    <g fill="none" stroke="#aad3df">
      <path d="M293 449Q299 463 307 477L310 533 311 630Q307 642 293 654L277 672" strokeWidth="6" />
      <path d="M58 597L84 627" strokeWidth="5" />
      <path d="M84 627Q89 635 88 671" strokeWidth="2.500" />
      <path d="M586 598Q586 630 592 645L607 671M449 221L470 232M512 239H528" strokeWidth="2.500" />
    </g>
    <path d="M876 222h5M881 227h6M893 225h7M903 224h3M881 231h16M906 231h6" stroke="#4a90c8" strokeWidth="1" />
    <Strokes items={streets} color="#c8c4be" width={(w) => (w || 3.8) + 1.4} />
    <Strokes items={streets} color="#fff" width={(w) => w || 3.8} />
    <path d="M302 466v6M307 492v6M308 530h6" stroke="#555" strokeWidth="1" />
    <Strokes items={secondary} color="#707d05" width={() => 8.5} />
    <path transform={sheets.nw} d="M468 20H492L525 185Q550 235 590 265L570 280Q530 240 502 212L500 140Z" fill="#e4eca0" stroke="#8d9a35" strokeWidth="1.200" vectorEffect="non-scaling-stroke" />
    <Strokes items={primary} color="#a06b00" width={() => 11.2} />
    <Strokes items={railside} color="#a06b00" width={() => 8} />
    <Strokes items={secondary} color="#eef3a5" width={() => 6.5} />
    <Strokes items={primary} color="#fcd6a4" width={() => 9.4} />
    <Strokes items={railside} color="#fcc98c" width={() => 6.2} />
    <circle cx="210" cy="303" r="8.500" fill="#fcd6a4" />
    <ellipse cx="380" cy="421" rx="8" ry="5" fill="#fcd6a4" />
    <Strokes items={rails} color="#555" width={() => 6} />
    {rails.map(([s, d], i) => (
      <path key={i} transform={sheets[s]} d={d} fill="none" stroke="#f4f4f4" strokeWidth="4" strokeDasharray="3.500 2.800" vectorEffect="non-scaling-stroke" />
    ))}
    <circle cx="294" cy="445" r="5.500" fill="none" stroke="#dfe89a" strokeWidth="2" />
    <circle cx="362" cy="461" r="5" fill="none" stroke="#cbc7c3" strokeWidth="3" />
    <path d="M558 221L599.500 279 632.500 325 660 365M591 223L564.500 263 539.500 302 570 366 600 460 626 551 648 630 660 671M546 495L551.500 510 577.500 569 602 623 623 671" fill="none" stroke="#8c8c8c" strokeWidth=".8" />
    {pylons.map(([x, y]) => (
      <rect key={`${x}-${y}`} x={x - 2} y={y - 2} width="4" height="4" fill="#ddd" stroke="#666" strokeWidth="1" />
    ))}
    {[[368, 234], [494.5, 368]].map(([x, y]) => (
      <g key={x}>
        <circle cx={x} cy={y} r="7" fill="#c40010" />
        <path d={`M${x - 4} ${y}h8M${x} ${y - 4}v8`} stroke="#fff" strokeWidth="1.800" />
      </g>
    ))}
    <g stroke="#f5f2ec" strokeWidth="1.600" paintOrder="stroke" strokeLinejoin="round" fill="#222" strokeOpacity=".6">
      {curves.map((c) => (
        <text key={c.id} fontSize={c.size} textLength={c.len}>
          <textPath href={`#${c.id}`}>{c.text}</textPath>
        </text>
      ))}
      <text x="479" y="238" fontSize="10.500" fontStyle="italic" fill="#3f86b8" transform="rotate(6 479 238)">CANAL</text>
      <text x="370" y="411" fontSize="14" fill="#6b6b6b">Kakk</text>
      <text x="450" y="404" fontSize="10.500">Colle</text>
      <text x="502" y="394" fontSize="9.500" transform="rotate(-8 502 394)">Road</text>
      <text x="468.500" y="539" fontSize="10.500">F City</text>
      <text x="9" y="592" fontSize="14" fill="#6b6b6b">nad West</text>
      <text x="9" y="509" fontSize="10" transform="rotate(-9 9 509)">Road</text>
      <text x="397" y="679" fontSize="11" fill="#9b1010">Cochin</text>
    </g>
    <rect x="38" y="489.500" width="33" height="17" rx="2" fill="#fbe3c6" stroke="#cf9f62" strokeWidth="1.200" />
    <text x="42.500" y="502" fontSize="10" fill="#5c4526">SH41</text>
    <Pin x={420.7} y={438} />
    <Pin x={541.7} y={502} />
    <Pin x={444.5} y={573} />
  </svg>
);

/* ---------- data ---------- */

const listCols = "129.5px 190px 242.5px 1fr";
const buildingRows = ["Building A", "Kesar Building", "Building B"];

const alarmCols = "247px 119px 190px 159px 159px 302px 159px 314px 1fr";
const alarmHeads = ["Timestamp", "Active", "Originator", "Building", "Floor", "Type", "Severity", "Status", "Actions"];
const alarms = [
  { time: "20/05/21 17:15:16", on: true, type: "HUMIDITY ALARM", sev: "WARNING", status: "active unacknowledged" },
  { time: "17/05/21 12:30:07", on: false, type: "HUMIDITY ALARM", sev: "WARNING", status: "cleared unacknowledged" },
  { time: "17/05/21 12:29:57", on: false, type: "TEMPERATURE ALARM", sev: "CRITICAL", status: "cleared unacknowledged" },
];

export default function App() {
  return (
    <Screen>
      <GlobalStyle />
      <TabStrip>
        <Tab>
          <ReactLogo />
          <TabTitle>Elegante BMS</TabTitle>
          <svg width="14" height="14" viewBox="0 0 14 14" stroke="#f1f1f1" strokeWidth="1.800">
            <path d="M3.200 3.200l7.600 7.600M10.800 3.200l-7.600 7.600" />
          </svg>
        </Tab>
        <NewTab>
          <svg width="14" height="14" viewBox="0 0 14 14" stroke="#fff" strokeWidth="2">
            <path d="M7 1v12M1 7h12" />
          </svg>
        </NewTab>
        <WindowButtons>
          <svg width="14" height="14" viewBox="0 0 14 14">
            <circle cx="7" cy="7" r="7" fill="#fff" />
            <path d="M3.800 5h6.400L7 9.500z" fill="#000" />
          </svg>
          <svg width="12" height="12" viewBox="0 0 12 12"><path d="M1 9h10v2H1z" fill="#eee" /></svg>
          <svg width="12" height="12" viewBox="0 0 12 12" fill="none" stroke="#eee">
            <path d="M4.500 1.800h5.700v5.400H4.500z" strokeWidth="1.800" />
            <path d="M1.300 3.500v7h7" strokeWidth="1.600" />
          </svg>
          <svg width="12" height="12" viewBox="0 0 12 12" stroke="#eee" strokeWidth="2"><path d="M1.500 1.500l9 9M10.500 1.500l-9 9" /></svg>
        </WindowButtons>
      </TabStrip>
      <Toolbar>
        <NavIcons>
          <Icon name="back" size={20} color="#f1f1f1" />
          <Icon name="forward" size={20} color="#7b7b7b" />
          <Icon name="reload" size={20} color="#e6e6e6" />
        </NavIcons>
        <Omnibox>
          <Icon name="info" size={17} color="#e6e6e6" />
          <Url>localhost<span>:3000</span></Url>
          <Icon name="star" size={17} color="#c4c4c4" />
        </Omnibox>
        <Extensions>
          <svg width="16" height="16" viewBox="0 0 16 16">
            <path d="M4.700 0h6.600L16 4.700v6.600L11.300 16H4.700L0 11.300V4.700z" fill="#e40d0d" />
            <path d="M4.500 8V5.500q.7-.7 1.300 0V8L6 3.500q.6-.7 1.200 0V7.500L7.500 2.500q.6-.7 1.200 0V7.500L9.200 3.500q.6-.7 1.200 0L10.300 9l1.200-1.300q.9 0 .8.800L10 12.500q-.8 1-2.200 1-2.600 0-3-2.500z" fill="#fff" />
          </svg>
          <svg width="13" height="14" viewBox="0 0 14 16">
            <path d="M1 3q1-2.500 6-2.500T13 3q0 1.500-2 4.500L7 15.500 3 7.500Q1 4.500 1 3z" fill="#1487e8" />
            <path d="M7 15.500L4.500 6Q7 7.500 9.500 6z" fill="#06418e" />
            <path d="M2 2.500Q4 1 7 1L6 6 4 6.500z" fill="#a8dcff" />
          </svg>
          <Icon name="puzzle" size={16} color="#dcdcdc" />
          <Avatar />
          <Icon name="dots" size={20} color="#f1f1f1" />
        </Extensions>
      </Toolbar>

      <Viewport>
        <Page>
          <AppBar>
            <Icon name="business" />
            <Brand>Elegante</Brand>
            <Logout>LOGOUT</Logout>
          </AppBar>
          <Heading>Buildings Overview</Heading>
          <Content>
            <MapPaper>
              <MapDrawing />
              <ZoomControl>
                <ZoomButton>
                  <svg width="12" height="12" viewBox="0 0 12 12"><path d="M4.800 0h2.400v4.800H12v2.400H7.200V12H4.800V7.200H0V4.800h4.800z" /></svg>
                </ZoomButton>
                <ZoomButton>
                  <svg width="12" height="12" viewBox="0 0 12 12"><path d="M0 4.800h12v2.400H0z" /></svg>
                </ZoomButton>
              </ZoomControl>
              <Tip $x={356} $y={107} $w={80} $arrow={40}>Building A</Tip>
              <Tip $x={463} $y={171} $w={107} $arrow={55}>Kesar Building</Tip>
              <Tip $x={380} $y={242} $w={80} $arrow={39}>Building B</Tip>
            </MapPaper>

            <Paper>
              <CardTitle>Buildings List</CardTitle>
              <Row $cols={listCols} $head>
                <Cell>Number</Cell>
                <Cell>Name</Cell>
                <Cell>Emergency Contact</Cell>
                <Cell>Actions</Cell>
              </Row>
              {buildingRows.map((name, i) => (
                <Row key={name} $cols={listCols}>
                  <Cell>{i + 1}</Cell>
                  <Cell>{name}</Cell>
                  <Cell>+34435656534</Cell>
                  <CellActions>
                    <Icon name="open" />
                    <Icon name="play" />
                  </CellActions>
                </Row>
              ))}
              <Pagination>
                Rows per page:
                <PageSize>10 <Icon name="drop" color="rgba(0,0,0,.54)" /></PageSize>
                1-3 of 3
                <Pager>
                  <Icon name="left" />
                  <Icon name="right" />
                </Pager>
              </Pagination>
            </Paper>

            <WidePaper>
              <CardTitle>Buildings Alarm</CardTitle>
              <ScrollPane>
                <div>
                  <Row $cols={alarmCols} $head>
                    {alarmHeads.map((h) => (
                      <Cell key={h}>{h}</Cell>
                    ))}
                  </Row>
                  {alarms.map((a) => (
                    <Row key={a.time} $cols={alarmCols}>
                      <Cell>{a.time}</Cell>
                      <Cell><Led $on={a.on} /></Cell>
                      <Cell $color="#c93a18">B2/F0/DHT-1</Cell>
                      <Cell>Building A</Cell>
                      <Cell>First Floor</Cell>
                      <Cell $color="#ff8f00">{a.type}</Cell>
                      <Cell $color={a.sev === "WARNING" ? "#ffd600" : "#e65100"}>{a.sev}</Cell>
                      <Cell>{a.status}</Cell>
                      <CellActions>
                        <Icon name="open" />
                        <Icon name="close" color="#f00" />
                      </CellActions>
                    </Row>
                  ))}
                </div>
                <ScrollTrack>
                  <ScrollArrow />
                  <ScrollThumb />
                </ScrollTrack>
              </ScrollPane>
            </WidePaper>
          </Content>
        </Page>
        <Fab><Icon name="add" /></Fab>
        <Backdrop>
          <Dialog>
            <DialogTitle>Add Building</DialogTitle>
            <DialogBody>
              <DialogText>Please add following details to add a new building.</DialogText>
              <Field $focused>Building Name<Caret /></Field>
              <Field>Address</Field>
              <Field>Description</Field>
              <FieldPair>
                <Field $width={201}>Latitude</Field>
                <Field $width={201}>Longitude</Field>
              </FieldPair>
            </DialogBody>
            <DialogActions>
              <TextButton $color="#3f51b5">SAVE</TextButton>
              <TextButton $color="#f50057">CANCEL</TextButton>
            </DialogActions>
          </Dialog>
        </Backdrop>
      </Viewport>
    </Screen>
  );
}
